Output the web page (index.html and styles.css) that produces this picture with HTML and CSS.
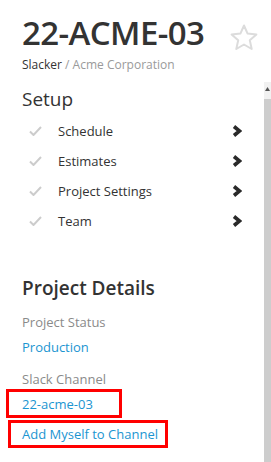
FILE: index.html
```html
<!DOCTYPE html>
<html lang="en">
<head>
    <meta charset="UTF-8">
    <meta name="viewport" content="width=device-width, initial-scale=1.0">
    <title>22-ACME-03</title>
    <link rel="stylesheet" href="styles.css">
</head>
<body>

    <div class="project-header">
        <div class="title-row">
            <h1 class="project-title">22-ACME-03</h1>
            <svg class="star" width="28" height="27" viewBox="0 0 28 27">
                <polygon points="14,1.5 17.6,9.6 26.4,10.4 19.8,16.3 21.7,25 14,20.5 6.3,25 8.2,16.3 1.6,10.4 10.4,9.6" fill="none" stroke="#dcdcdc" stroke-width="2" stroke-linejoin="round"/>
            </svg>
        </div>
        <p class="breadcrumb"><span class="team">Slacker</span> / Acme Corporation</p>
    </div>

    <div class="panel">
        <div class="panel-body">
            <h2 class="section-title">Setup</h2>
            <ul class="setup-list">
                <li class="setup-item">
                    <svg class="check" width="13" height="10" viewBox="0 0 13 10"><polyline points="1,5.5 4.5,9 12,1" fill="none" stroke="#cccccc" stroke-width="2"/></svg>
                    <span class="setup-name">Schedule</span>
                    <svg class="chevron" width="10" height="12" viewBox="0 0 10 12"><polyline points="2,1.5 7.5,6 2,10.5" fill="none" stroke="#2a2a2a" stroke-width="3.6"/></svg>
                </li>
                <li class="setup-item">
                    <svg class="check" width="13" height="10" viewBox="0 0 13 10"><polyline points="1,5.5 4.5,9 12,1" fill="none" stroke="#cccccc" stroke-width="2"/></svg>
                    <span class="setup-name">Estimates</span>
                    <svg class="chevron" width="10" height="12" viewBox="0 0 10 12"><polyline points="2,1.5 7.5,6 2,10.5" fill="none" stroke="#2a2a2a" stroke-width="3.6"/></svg>
                </li>
                <li class="setup-item">
                    <svg class="check" width="13" height="10" viewBox="0 0 13 10"><polyline points="1,5.5 4.5,9 12,1" fill="none" stroke="#cccccc" stroke-width="2"/></svg>
                    <span class="setup-name">Project Settings</span>
                    <svg class="chevron" width="10" height="12" viewBox="0 0 10 12"><polyline points="2,1.5 7.5,6 2,10.5" fill="none" stroke="#2a2a2a" stroke-width="3.6"/></svg>
                </li>
                <li class="setup-item">
                    <svg class="check" width="13" height="10" viewBox="0 0 13 10"><polyline points="1,5.5 4.5,9 12,1" fill="none" stroke="#cccccc" stroke-width="2"/></svg>
                    <span class="setup-name">Team</span>
                    <svg class="chevron" width="10" height="12" viewBox="0 0 10 12"><polyline points="2,1.5 7.5,6 2,10.5" fill="none" stroke="#2a2a2a" stroke-width="3.6"/></svg>
                </li>
            </ul>

            <h2 class="section-title details-title">Project Details</h2>

            <div class="detail-label">Project Status</div>
            <a class="detail-link" href="#">Production</a>

            <div class="detail-label">Slack Channel</div>
            <a class="detail-link marked channel" href="#">22-acme-03</a>
            <a class="detail-link marked join" href="#">Add Myself to Channel</a>
        </div>

        <div class="scrollbar">
            <div class="scroll-btn">
                <svg width="7" height="6" viewBox="0 0 7 6"><polygon points="3.5,1 6,5 1,5" fill="#555"/></svg>
            </div>
            <div class="scroll-thumb"></div>
        </div>
    </div>

</body>
</html>
```

FILE: styles.css
```css
body {
    font-family: 'Open Sans', 'Liberation Sans', sans-serif;
    margin: 0;
    background-color: #ffffff;
    color: #333333;
    width: 271px;
    height: 462px;
    overflow: hidden;
}

.project-header {
    height: 82px;
    padding-left: 22px;
    box-sizing: border-box;
}

.title-row {
    display: flex;
    align-items: flex-start;
    padding-top: 13px;
}

.project-title {
    margin: 0;
    font-size: 33px;
    font-weight: 600;
    line-height: 40px;
    color: #333333;
    letter-spacing: -0.6px;
}

.star {
    margin-left: auto;
    margin-right: 13px;
    margin-top: 11px;
}

.breadcrumb {
    margin: 4px 0 0;
    font-size: 12px;
    line-height: 16px;
    color: #9a9a9a;
}

.team {
    color: #333333;
}

.panel {
    display: flex;
    height: 380px;
    overflow: hidden;
}

.panel-body {
    flex: 1;
    padding: 5px 23px 0 22px;
}

.section-title {
    margin: 0;
    font-size: 19px;
    font-weight: 500;
    line-height: 24px;
    color: #333333;
}

.details-title {
    margin-top: 40px;
    font-weight: 600;
}

.setup-list {
    list-style: none;
    padding: 0;
    margin: 5px 0 0;
}

.setup-item {
    display: flex;
    align-items: center;
    height: 30px;
    padding-left: 7px;
    font-size: 13px;
}

.check {
    margin-right: 16px;
}

.chevron {
    margin-left: auto;
    margin-right: -1px;
}

.detail-label {
    margin-top: 12px;
    font-size: 13px;
    line-height: 20px;
    color: #8a8a8a;
}

.detail-link {
    display: block;
    margin-top: 5px;
    font-size: 13px;
    line-height: 20px;
    color: #1b95d1;
    text-decoration: none;
}

.marked {
    border: 3px solid #ff0000;
    box-sizing: border-box;
}

.channel {
    margin-top: 0;
    margin-left: -16px;
    width: 116px;
    padding: 2px 0 1px 13px;
}

.join {
    margin-top: 2px;
    margin-left: -14px;
    width: 160px;
    padding: 1px 0 1px 11px;
}

.scrollbar {
    width: 7px;
    display: flex;
    flex-direction: column;
}

.scroll-btn {
    height: 17px;
    background-color: #f1f1f1;
    display: flex;
    justify-content: center;
    padding-top: 4px;
    box-sizing: border-box;
}

.scroll-thumb {
    flex: 1;
    background-color: #cdcdcd;
}
```
